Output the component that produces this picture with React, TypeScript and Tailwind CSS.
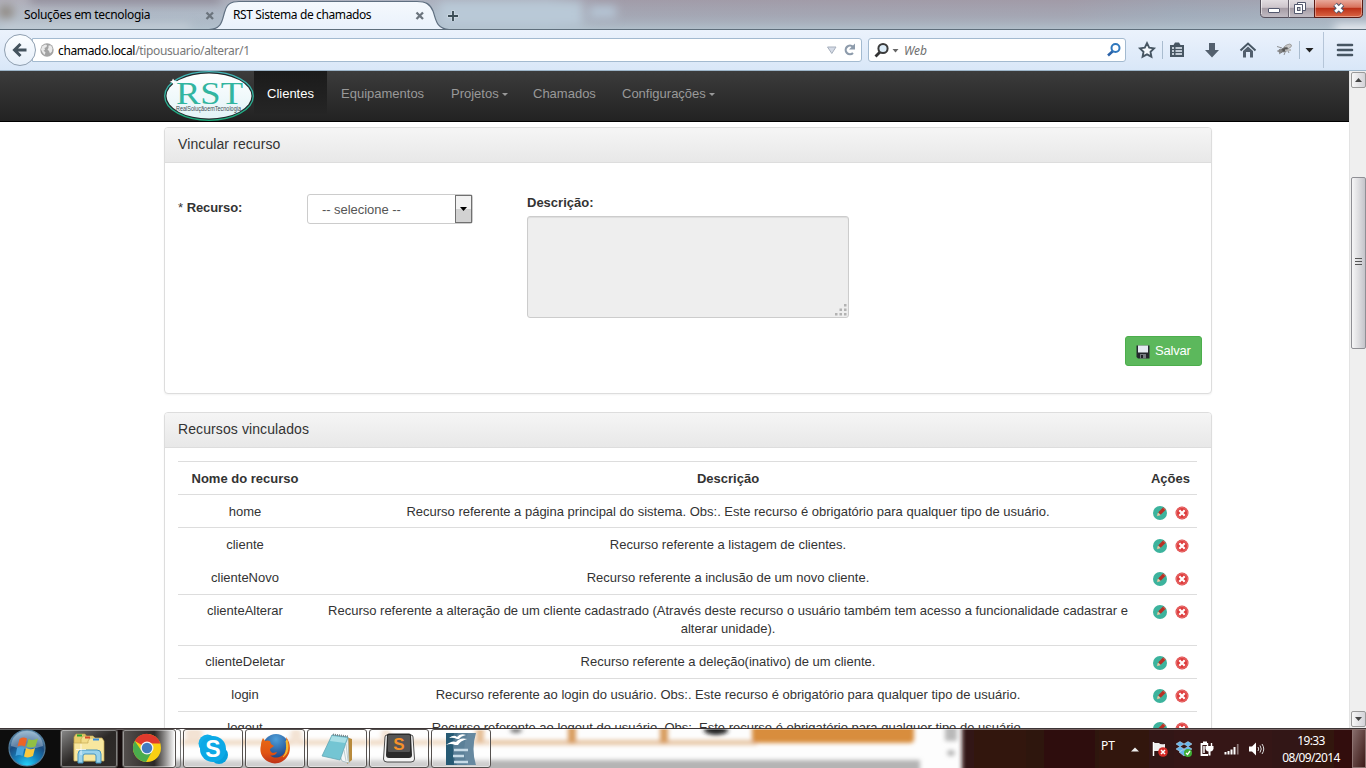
import React from "react";

type Resource = { name: string; text: string; height: string; line: boolean };

const resources: Resource[] = [
  { name: "home", text: "Recurso referente a página principal do sistema. Obs:. Este recurso é obrigatório para qualquer tipo de usuário.", height: "h-[33px] pt-[8px]", line: true },
  { name: "cliente", text: "Recurso referente a listagem de clientes.", height: "h-[34px] pt-[8px]", line: true },
  { name: "clienteNovo", text: "Recurso referente a inclusão de um novo cliente.", height: "h-[33px] pt-[7px]", line: false },
  { name: "clienteAlterar", text: "Recurso referente a alteração de um cliente cadastrado (Através deste recurso o usuário também tem acesso a funcionalidade cadastrar e alterar unidade).", height: "h-[51px] pt-[7px]", line: true },
  { name: "clienteDeletar", text: "Recurso referente a deleção(inativo) de um cliente.", height: "h-[33px] pt-[7px]", line: true },
  { name: "login", text: "Recurso referente ao login do usuário. Obs:. Este recurso é obrigatório para qualquer tipo de usuário.", height: "h-[33px] pt-[7px]", line: true },
  { name: "logout", text: "Recurso referente ao logout do usuário. Obs:. Este recurso é obrigatório para qualquer tipo de usuário.", height: "h-[33px] pt-[7px]", line: true },
];

const columns = "grid grid-cols-[134px_832px_53px]";

function TabClose() {
  return (
    <svg width="10" height="10" viewBox="0 0 10 10" className="mt-px shrink-0">
      <path d="M1.500 1.500 8 8M8 1.500 1.500 8" stroke="#6b747d" strokeWidth="2.300" />
    </svg>
  );
}

function WindowButtons() {
  return (
    <svg width="104" height="20" viewBox="0 0 104 20" className="ml-auto mr-[2px] shrink-0 self-start">
      <defs>
        <linearGradient id="wb" x1="0" y1="0" x2="0" y2="1">
          <stop offset="0" stopColor="#e4dfe3" />
          <stop offset=".45" stopColor="#cdc5cb" />
          <stop offset=".5" stopColor="#a59ca5" />
          <stop offset="1" stopColor="#c3bdc5" />
        </linearGradient>
        <linearGradient id="wc" x1="0" y1="0" x2="0" y2="1">
          <stop offset="0" stopColor="#eab0a3" />
          <stop offset=".45" stopColor="#d8715c" />
          <stop offset=".5" stopColor="#bb2f17" />
          <stop offset="1" stopColor="#dc6a48" />
        </linearGradient>
      </defs>
      <path d="M.5 -1V13.500Q.5 17.500 5 17.500H56V-1Z" fill="url(#wb)" stroke="#55505c" />
      <path d="M28.500 0V18" stroke="#6b6570" />
      <path d="M29.500 0V17M1.500 0V14" stroke="#fff" strokeOpacity=".55" />
      <path d="M54.500 -1V17.500H98Q102.500 17.500 102.500 13.500V-1Z" fill="url(#wc)" stroke="#5a1a14" />
      <path d="M55.500 0V16.500H98Q101.500 16.500 101.500 13.500V0" fill="none" stroke="#fff" strokeOpacity=".35" />
      <rect x="8.500" y="8.500" width="11" height="4" rx=".5" fill="#fff" stroke="#53586e" />
      <path d="M37.500 2.500H45.500V10.500H37.500Z" fill="#fff" stroke="#53586e" />
      <path d="M34.500 4.500H42.500V13.500H34.500Z" fill="#fff" stroke="#53586e" />
      <rect x="37.500" y="7.500" width="2.500" height="3" fill="#ccc" stroke="#53586e" />
      <path d="M75 4.500 82.500 12M82.500 4.500 75 12" stroke="#53586e" strokeWidth="5" />
      <path d="M75.300 4.700 82.200 11.700M82.200 4.700 75.300 11.700" stroke="#fff" strokeWidth="2.800" />
    </svg>
  );
}

function TabStrip() {
  return (
    <div className="relative flex h-[30px] shrink-0 overflow-hidden border-b border-[#5f6f7c] bg-[#a9b4c2] font-['Noto_Sans','Open_Sans',sans-serif] text-[12px] text-black">
      <svg width="1366" height="30" className="absolute left-0 top-0" preserveAspectRatio="none">
        <defs>
          <filter id="soft" x="-20%" y="-50%" width="140%" height="200%"><feGaussianBlur stdDeviation="5" /></filter>
          <linearGradient id="strip" x1="0" y1="0" x2="1" y2="0">
            <stop offset="0" stopColor="#bcc1ca" />
            <stop offset=".1" stopColor="#b2bcc9" />
            <stop offset=".4" stopColor="#b5c5d3" />
            <stop offset=".44" stopColor="#a4a3b0" />
            <stop offset=".78" stopColor="#a4a1ae" />
            <stop offset=".86" stopColor="#a0abba" />
            <stop offset="1" stopColor="#a9b2c0" />
          </linearGradient>
          <linearGradient id="stripv" x1="0" y1="0" x2="0" y2="1">
            <stop offset="0" stopColor="#9d8f9b" stopOpacity=".35" />
            <stop offset=".5" stopColor="#a5b0bd" stopOpacity=".3" />
            <stop offset="1" stopColor="#b3c4cf" stopOpacity=".9" />
          </linearGradient>
        </defs>
        <rect width="1366" height="30" fill="url(#strip)" />
        <rect width="1366" height="30" fill="url(#stripv)" />
        <g filter="url(#soft)">
          <ellipse cx="6" cy="12" rx="8" ry="7" fill="#8f8982" />
          <rect x="440" y="2" width="142" height="24" fill="#b9c9d7" />
          <rect x="590" y="6" width="26" height="12" fill="#b6c6d6" />
          <rect x="30" y="-6" width="190" height="9" fill="#8d8997" />
          <rect x="0" y="25" width="190" height="5" fill="#ccd3dc" />
          <rect x="1335" y="24" width="40" height="12" fill="#e7eaf0" />
        </g>
      </svg>
      <div className="relative flex w-[215px] items-center pl-6 pt-px">
        <span className="w-[182px] whitespace-nowrap tracking-[-0.32px]">Soluções em tecnologia</span>
        <TabClose />
      </div>
      <div className="relative flex w-[230px] items-center pl-[18px] pt-px">
        <svg width="244" height="30" viewBox="0 0 244 30" className="absolute -left-[8px] top-0">
          <defs>
            <linearGradient id="act" x1="0" y1="0" x2="0" y2="1">
              <stop offset="0" stopColor="#f5f9fd" />
              <stop offset="1" stopColor="#e9f1fb" />
            </linearGradient>
          </defs>
          <path d="M2 29.500C16 29 15 19 18 11C20 4 24 1.500 32 1.500H210C219 1.500 223 4 226 11C229 19 229 29 242 29.500V31H2Z" fill="url(#act)" stroke="#5f6f80" strokeWidth="1.200" />
        </svg>
        <span className="relative w-[182px] whitespace-nowrap tracking-[-0.38px]">RST Sistema de chamados</span>
        <span className="relative"><TabClose /></span>
      </div>
      <svg width="14" height="14" viewBox="0 0 14 14" className="relative ml-[1px] mt-[9px]">
        <path d="M7 1.500V12M1.500 7H12.500" stroke="#eef3f6" strokeWidth="3" strokeOpacity=".6" />
        <path d="M7 2V12M2 7H12" stroke="#3c4e57" strokeWidth="1.900" />
      </svg>
      <div className="relative ml-auto flex"><WindowButtons /></div>
    </div>
  );
}

function Toolbar() {
  return (
    <div className="flex h-[41px] shrink-0 items-center border-b border-[#9db5c9] bg-gradient-to-b from-[#ebf2fc] to-[#d9e7f8] font-['Noto_Sans','Open_Sans',sans-serif] text-[12px]">
      <div className="z-10 ml-1 flex size-8 items-center justify-center rounded-full border border-[#8f9fb0] bg-gradient-to-b from-[#fbfdff] to-[#e6effa]">
        <svg width="16" height="16" viewBox="0 0 16 16"><path d="M14.500 8H3M8.500 2 2.500 8 8.500 14" fill="none" stroke="#44535e" strokeWidth="3" /></svg>
      </div>
      <div className="-ml-1 flex h-6 w-[830px] items-center rounded-r-[3px] border border-[#a3bad0] bg-white pl-[7px]">
        <svg width="14" height="14" viewBox="0 0 14 14">
          <circle cx="7" cy="7" r="6.700" fill="#a3a3a3" />
          <path d="M2 3.500 5 1.500 7 2 6.500 4 4.500 5 5 7 3.500 7.500 5.500 9.500 4.500 12 2.500 9.500 1 6.500ZM8.500 2.500 11 2.500 12.500 5 12 8.500 10 10.500 9 8 7.500 6.500 8.500 5Z" fill="#e9e9e9" />
        </svg>
        <span className="ml-[4px] mt-[2px] whitespace-nowrap tracking-[-0.35px] text-[#777]"><span className="text-black">chamado.local</span>/tipousuario/alterar/1</span>
        <svg width="40" height="16" viewBox="0 0 40 16" className="ml-auto">
          <path d="M6.500 5H15L10.800 11.500Z" fill="#d5dbe6" stroke="#a7b0bd" />
          <path d="M32 4.800A4.300 4.300 0 1 0 32 11" fill="none" stroke="#8d9bab" strokeWidth="2.200" />
          <path d="M34 1.500V7.500H28Z" fill="#8d9bab" />
        </svg>
      </div>
      <div className="ml-[6px] flex h-6 w-[258px] items-center rounded-[3px] border border-[#a3bad0] bg-white pl-[5px] pr-[3px]">
        <svg width="26" height="16" viewBox="0 0 26 16">
          <path d="M6 10 1.500 14.500" stroke="#333" strokeWidth="2.800" />
          <circle cx="9" cy="6.500" r="4.600" fill="#dcecf8" stroke="#3b3b3b" strokeWidth="2" />
          <path d="M18.500 7H24.500L21.500 10.500Z" fill="#666" />
        </svg>
        <span className="ml-[4px] mt-[2px] italic text-[#6f6f6f]">Web</span>
        <svg width="16" height="16" viewBox="0 0 16 16" className="ml-auto">
          <path d="M7 9 2 13.500" stroke="#2b62a8" strokeWidth="2.600" />
          <circle cx="9.500" cy="6" r="4" fill="#fff" stroke="#2f77bd" strokeWidth="2" />
        </svg>
      </div>
      <svg width="240" height="40" viewBox="1126 30 240 40">
        <path d="M1147 43.200 1149.200 47.700 1154 48.400 1150.500 51.800 1151.400 56.700 1147 54.300 1142.600 56.700 1143.500 51.800 1140 48.400 1144.800 47.700Z" fill="#f4f8fd" stroke="#475663" strokeWidth="1.900" />
        <path d="M1162.500 41V59M1299.500 41V59" stroke="#a9bccf" />
        <path d="M1323.500 32V68" stroke="#b5c5d8" />
        <path d="M1170 45H1173.500L1175 42.500H1179L1180.500 45H1184V57H1170Z" fill="#475663" />
        <path d="M1172 48H1174M1175.500 48H1182M1172 51H1174M1175.500 51H1182M1172 54H1174M1175.500 54H1182" stroke="#e9f1fb" strokeWidth="1.500" />
        <path d="M1209 43H1215V50H1219L1212 57.500 1205 50H1209Z" fill="#53606e" />
        <path d="M1240.500 50.500 1248 43.500 1255.500 50.500" fill="none" stroke="#475663" strokeWidth="2" />
        <path d="M1243 51 1248 46.500 1253 51V57.500H1250V52H1246V57.500H1243Z" fill="#53606e" />
        <g fill="none" stroke="#777" strokeWidth=".8">
          <path d="M1277 46.500 1282 48M1279 54 1283 51M1284 55 1286 50M1289 53 1287 49M1277 51H1282" />
          <ellipse cx="1287.500" cy="46.500" rx="4" ry="2" fill="#c9c9c9" stroke="#999" transform="rotate(-25 1288 46)" />
          <ellipse cx="1284.500" cy="49.500" rx="3.500" ry="2" fill="#555" transform="rotate(-20 1285 49)" />
          <ellipse cx="1280.500" cy="51" rx="1.800" ry="1.800" fill="#888" />
          <path d="M1285 50.500 1291 50" stroke="#bbb" strokeWidth="2" />
        </g>
        <path d="M1305.500 48H1313.500L1309.500 52.500Z" fill="#222" />
        <path d="M1338 45H1352M1338 50H1352M1338 55H1352" stroke="#475663" strokeWidth="2.600" strokeLinecap="round" />
      </svg>
    </div>
  );
}

function Caret() {
  return <span className="mb-[1px] ml-[3px] inline-block border-x-[3px] border-t-[3px] border-x-transparent border-t-[#999] align-middle" />;
}

function Logo() {
  return (
    <svg width="90" height="51" viewBox="0 0 90 51" className="shrink-0">
      <defs>
        <linearGradient id="ring" x1="0" y1="0" x2="0" y2="1"><stop offset="0" stopColor="#45b7bb" /><stop offset="1" stopColor="#1cab7b" /></linearGradient>
        <linearGradient id="plate" x1="0" y1="0" x2="0" y2="1"><stop offset="0" stopColor="#fff" /><stop offset="1" stopColor="#e2f3f7" /></linearGradient>
      </defs>
      <ellipse cx="45" cy="25" rx="44.300" ry="24.300" fill="#20282a" stroke="url(#ring)" strokeWidth="1.300" />
      <ellipse cx="45" cy="25" rx="42.500" ry="22.500" fill="url(#plate)" />
      <path d="M9 7.500 10.300 9.500 13 10 10.500 11.300 9.500 13.500 8 11.500 5.500 11 8 9.800Z" fill="#fff" />
      <path d="M10 11 15 11.500" stroke="#f4fafc" strokeWidth="2" />
      <text x="12" y="32.500" textLength="67" lengthAdjust="spacingAndGlyphs" fontFamily="Liberation Serif, serif" fontSize="32" fill="#32b5a0">RST</text>
      <text x="12" y="40" textLength="65" lengthAdjust="spacingAndGlyphs" fontFamily="Liberation Sans, sans-serif" fontSize="7.500" fill="#414b50">RealSoluçãoemTecnologia</text>
    </svg>
  );
}

function Navbar() {
  return (
    <nav className="flex h-[51px] shrink-0 border-b border-black bg-gradient-to-b from-[#3c3c3c] to-[#222] pl-[164px] text-[13px] leading-[45px] text-[#999]">
      <Logo />
      <a className="h-[43px] w-[73px] bg-gradient-to-b from-[#1b1b1b] to-[#252525] pl-[13px] text-white">Clientes</a>
      <a className="w-[110px] pl-[14px]">Equipamentos</a>
      <a className="w-[82px] pl-[14px]">Projetos<Caret /></a>
      <a className="w-[89px] pl-[14px]">Chamados</a>
      <a className="pl-[14px]">Configurações<Caret /></a>
    </nav>
  );
}

function Panel({ title, className, children }: { title: string; className: string; children: React.ReactNode }) {
  return (
    <section className={`rounded-[4px] border border-[#ddd] bg-white shadow-[0_1px_2px_rgba(0,0,0,0.05)] ${className}`}>
      <h2 className="h-[35px] rounded-t-[3px] border-b border-[#ddd] bg-gradient-to-b from-[#f5f5f5] to-[#e8e8e8] pl-[13px] text-[14px] leading-[33px] tracking-[0.1px]">{title}</h2>
      {children}
    </section>
  );
}

function SaveIcon() {
  return (
    <svg width="14" height="14" viewBox="0 0 14 14">
      <path d="M.5.500H13.500V13.500H2L.5 12Z" fill="#25282e" />
      <path d="M2 .5H12V7.500H2Z" fill="#e5eaf2" />
      <path d="M4 9H10V13.500H4Z" fill="#777c83" />
      <path d="M5 10H7V13H5Z" fill="#202329" />
    </svg>
  );
}

function Actions() {
  return (
    <svg width="38" height="16" viewBox="0 0 38 16">
      <circle cx="8" cy="8" r="7" fill="#3cb39d" />
      <path d="M7.500 8.500 12.500 3.500" stroke="#b93025" strokeWidth="3.400" />
      <path d="M5.300 10.800 6 8 8.200 10Z" fill="#f3c9a0" stroke="#efc6a0" strokeWidth=".5" />
      <path d="M11.500 3 13.500 5" stroke="#d97362" />
      <circle cx="30" cy="8" r="6.500" fill="#de3c3c" />
      <circle cx="30" cy="8" r="5.500" fill="none" stroke="#ed8888" strokeWidth=".7" />
      <path d="M27.300 5.300 32.700 10.700M32.700 5.300 27.300 10.700" stroke="#fff" strokeWidth="2.200" />
    </svg>
  );
}

function Scrollbar() {
  return (
    <div className="flex w-[17px] shrink-0 flex-col items-center border-l border-[#e3e3e3] bg-[#efefef] pl-px">
      <div className="mt-px flex h-4 w-[15px] items-center justify-center rounded-[2px] border border-[#999] bg-gradient-to-r from-[#f7f7f7] to-[#d3d3d8]">
        <svg width="7" height="4"><path d="M0 4 3.500 0 7 4Z" fill="#444" /></svg>
      </div>
      <div className="mt-[89px] flex h-[172px] w-[15px] flex-col items-center justify-center gap-[2px] rounded-[2px] border border-[#8f8f95] bg-gradient-to-r from-[#f6f6f7] via-[#dedee1] to-[#c4c4ca] pb-[3px]">
        <i className="h-px w-[7px] bg-[#555]" /><i className="h-px w-[7px] bg-[#555]" /><i className="h-px w-[7px] bg-[#555]" />
      </div>
      <div className="mb-[1px] mt-auto flex h-4 w-[15px] items-center justify-center rounded-[2px] border border-[#999] bg-gradient-to-r from-[#f7f7f7] to-[#d3d3d8]">
        <svg width="7" height="4"><path d="M0 0 3.500 4 7 0Z" fill="#444" /></svg>
      </div>
    </div>
  );
}

function Page() {
  return (
    <main className="flex min-h-0 flex-1 overflow-hidden bg-white">
      <div className="flex min-w-0 flex-1 flex-col">
        <Navbar />
        <div className="min-h-0 flex-1 overflow-hidden pl-[164px] pt-[5px] text-[13px] leading-[18px] text-[#333]">
          <Panel title="Vincular recurso" className="flex h-[267px] w-[1048px] flex-col">
            <div className="flex">
              <div className="w-[129px] pl-[13px] pt-[36px]">* <b className="tracking-[-0.1px]">Recurso:</b></div>
              <div className="ml-[13px] mr-[54px] mt-[31px] flex h-[30px] w-[166px] rounded-[3px] border border-[#ccc] text-[#555]">
                <span className="flex-1 pl-[14px] leading-[29px] tracking-[-0.05px]">-- selecione --</span>
                <span className="flex w-[17px] items-center justify-center border border-[#707070] bg-gradient-to-b from-[#f2f2f2] from-50% to-[#d2d2d2] to-50%">
                  <svg width="7" height="4"><path d="M0 0H7L3.500 4Z" fill="#000" /></svg>
                </span>
              </div>
              <div className="pt-[31px]">
                <b className="block">Descrição:</b>
                <div className="mt-[4px] flex h-[102px] w-[322px] items-end justify-end rounded-[3px] border border-[#ccc] bg-[#eee] shadow-[inset_0_1px_1px_rgba(0,0,0,0.075)]">
                  <svg width="13" height="13" viewBox="0 0 13 13"><path d="M9 0h2.500v2.500h-2.500zM4.500 4.500h2.500v2.500h-2.500zM9 4.500h2.500v2.500h-2.500zM0 9h2.500v2.500h-2.500zM4.500 9h2.500v2.500h-2.500zM9 9h2.500v2.500h-2.500z" fill="#b2b2b2" /></svg>
                </div>
              </div>
            </div>
            <button className="ml-auto mr-[9px] mt-[18px] flex h-[30px] w-[77px] items-center rounded-[3px] border border-[#4cae4c] bg-[#5cb85c] pl-[10px] text-white">
              <span className="mt-[2px]"><SaveIcon /></span><span className="ml-[5px] tracking-[-0.2px]">Salvar</span>
            </button>
          </Panel>
          <Panel title="Recursos vinculados" className="mt-[18px] h-[400px] w-[1048px]">
            <div className="ml-[13px] mt-[13px] w-[1019px] text-center">
              <div className={`${columns} h-[33px] border-t border-[#ddd] pt-[8px] font-bold`}>
                <span>Nome do recurso</span><span>Descrição</span><span>Ações</span>
              </div>
              {resources.map((r) => (
                <div key={r.name} className={`${columns} ${r.height} border-t ${r.line ? "border-[#ddd]" : "border-transparent"}`}>
                  <span>{r.name}</span>
                  <span className="px-[7px]">{r.text}</span>
                  <span className="flex justify-center pt-[2px]"><Actions /></span>
                </div>
              ))}
            </div>
          </Panel>
        </div>
      </div>
      <Scrollbar />
    </main>
  );
}

function TaskButton({ children, className }: { children: React.ReactNode; className: string }) {
  return (
    <div className={`flex h-[39px] shrink-0 items-center justify-center rounded-[3px] border border-[#55514f] shadow-[inset_0_0_0_1px_rgba(255,255,255,0.4)] ${className}`}>
      {children}
    </div>
  );
}

function TaskBackdrop() {
  return (
    <svg width="1366" height="40" className="absolute left-0 top-0">
      <defs>
        <filter id="b2" x="-20%" y="-60%" width="140%" height="220%"><feGaussianBlur stdDeviation="2.200" /></filter>
        <linearGradient id="tbl" x1="0" y1="0" x2="1" y2="0"><stop offset="0" stopColor="#0a0606" /><stop offset="1" stopColor="#171111" /></linearGradient>
        <linearGradient id="tbr" x1="0" y1="0" x2="1" y2="0"><stop offset="0" stopColor="#321412" /><stop offset=".25" stopColor="#2e110f" /><stop offset=".6" stopColor="#361514" /><stop offset="1" stopColor="#2e100f" /></linearGradient>
        <linearGradient id="tbb" x1="0" y1="0" x2="0" y2="1"><stop offset="0" stopColor="#fff" /><stop offset="1" stopColor="#b5b5b5" /></linearGradient>
      </defs>
      <rect width="1366" height="40" fill="#fdfdfd" />
      <rect x="140" y="32" width="780" height="14" fill="#b4b4b4" filter="url(#b2)" />
      <g filter="url(#b2)">
        <rect x="182" y="12" width="575" height="5" fill="#e6c4a2" />
        <rect x="752" y="-8" width="162" height="23" rx="4" fill="#d88d3e" />
        <rect x="476" y="-3" width="8" height="18" fill="#d89c5e" />
        <rect x="568" y="-3" width="8" height="18" fill="#d89c5e" />
        <rect x="660" y="-3" width="8" height="18" fill="#d89c5e" />
        <ellipse cx="516" cy="2" rx="6" ry="3" fill="#777" />
        <ellipse cx="716" cy="2" rx="12" ry="5" fill="#222" />
        <ellipse cx="194" cy="6" rx="9" ry="8" fill="#edd4bd" />
        <ellipse cx="296" cy="8" rx="6" ry="8" fill="#edd4bd" />
        <ellipse cx="386" cy="8" rx="5" ry="8" fill="#edd4bd" />
        <rect x="945" y="-4" width="12" height="17" fill="#b9b9b9" />
        <ellipse cx="951" cy="25" rx="4" ry="3" fill="#b5b5b5" />
      </g>
      <rect x="-20" y="-10" width="182" height="65" fill="url(#tbl)" filter="url(#b2)" />
      <rect x="962" y="-12" width="430" height="70" fill="url(#tbr)" filter="url(#b2)" />
      <path d="M0 .5H1366" stroke="#3d3536" />
      <path d="M0 1.500H1366" stroke="#fff" strokeOpacity=".35" />
    </svg>
  );
}

function StartOrb() {
  return (
    <svg width="40" height="40" viewBox="0 0 40 40">
      <defs>
        <radialGradient id="orb" cx=".5" cy="1" r="1"><stop offset="0" stopColor="#25d8ff" /><stop offset=".35" stopColor="#1681bd" /><stop offset=".65" stopColor="#1c4c80" /><stop offset="1" stopColor="#7ba7c4" /></radialGradient>
      </defs>
      <circle cx="20" cy="20" r="18" fill="url(#orb)" stroke="#527c9b" strokeWidth="1.200" />
      <path d="M4 18A16 15 0 0 1 36 18Q20 24 4 18Z" fill="#fff" opacity=".3" />
      <path d="M12.500 11Q16 8.500 20 10.500L18 18.500Q14 16.500 10.500 18.500Z" fill="#ec6427" />
      <path d="M21.500 11Q26 13 31 10.500L28.500 18.500Q24 20.500 19.500 18.500Z" fill="#91c044" />
      <path d="M10 20Q14 18 17.500 20L15.500 28Q12 26 8.500 28Z" fill="#45a2dd" />
      <path d="M19 20Q24 22.500 28 20L26 28Q21 30.500 17 28.500Z" fill="#fac83d" />
    </svg>
  );
}

function ExplorerIcon() {
  return (
    <svg width="34" height="34" viewBox="0 0 34 34">
      <path d="M2 5 4 2H13L15 5V28H2Z" fill="#e9cc6d" stroke="#b99d45" strokeWidth=".7" />
      <path d="M9 7 11 4H21L23 6V29H9Z" fill="#f2dc88" stroke="#c0a54c" strokeWidth=".7" />
      <path d="M16 9 18 6H30L32 9V29H2V11H16Z" fill="#f8e79f" stroke="#c6ab55" strokeWidth=".7" />
      <path d="M5 3.500H10" stroke="#28a52d" strokeWidth="2" /><path d="M13 5.500H18" stroke="#d94b2b" strokeWidth="2" /><path d="M21 7.500H27" stroke="#3a8edb" strokeWidth="2" />
      <path d="M6 31V22Q6 18 10 18H25Q29 18 29 22V31H24V24Q24 22 22 22H13Q11 22 11 24V31Z" fill="#99d2eb" stroke="#4593bd" />
      <path d="M9 12V23M4 17.500H14" stroke="#fff" strokeOpacity=".7" />
    </svg>
  );
}

function ChromeIcon() {
  return (
    <svg width="30" height="30" viewBox="0 0 30 30" className="-translate-x-[2px] -translate-y-px">
      <circle cx="15" cy="15" r="14" fill="#f9d013" />
      <path d="M15 15 2.800 8A14 14 0 0 1 28.300 10.500H16Z" fill="#df3a2d" />
      <path d="M2.800 8A14 14 0 0 0 14 29L20 18.500 15 15 9 17Z" fill="#4aac4d" />
      <circle cx="15" cy="15" r="6.500" fill="#f5f5f5" />
      <circle cx="15" cy="15" r="5.200" fill="#417bc0" />
    </svg>
  );
}

function SkypeIcon() {
  return (
    <svg width="32" height="32" viewBox="0 0 32 32">
      <circle cx="10.500" cy="10.500" r="9" fill="#11aee9" /><circle cx="22" cy="22" r="9" fill="#079fdc" /><circle cx="16" cy="16" r="13" fill="#0ca9e6" />
      <text x="16" y="24" textAnchor="middle" fontFamily="Liberation Sans, sans-serif" fontWeight="bold" fontSize="23" fill="#fff">S</text>
    </svg>
  );
}

function FirefoxIcon() {
  return (
    <svg width="32" height="32" viewBox="0 0 32 32">
      <defs>
        <linearGradient id="fox" x1="0" y1="0" x2="0" y2="1"><stop offset="0" stopColor="#e86b16" /><stop offset=".6" stopColor="#e15412" /><stop offset="1" stopColor="#bd3219" /></linearGradient>
        <radialGradient id="glb" cx=".5" cy=".2" r=".8"><stop offset="0" stopColor="#4e9fda" /><stop offset="1" stopColor="#173b7f" /></radialGradient>
      </defs>
      <circle cx="17" cy="14" r="13" fill="url(#glb)" />
      <path d="M27 4C32 10 32 19 28 24C24 30 16 32 10 29C3 26 0 19 2 12C2 9 3 7 4 5L6 8Q8 7 11 8L12 11 15 13 11 16Q11 19 14 20L18 19C17 23 12 23 11 22C15 27 24 24 26 19C28 14 28 9 27 4Z" fill="url(#fox)" />
      <path d="M28 7C30 14 29 21 24 24C28 20 28 13 27 8Z" fill="#f7cf45" stroke="#f2b830" />
    </svg>
  );
}

function NotepadIcon() {
  return (
    <svg width="34" height="32" viewBox="0 0 34 32">
      <path d="M26 4 32 6V27L27 31Z" fill="#b88a3c" />
      <path d="M12 2 28 4 29 30 22 28Z" fill="#f3f7f8" stroke="#9ab2b8" strokeWidth=".7" />
      <path d="M12 2 28 4 20 27 2 23Z" fill="#74c5d3" stroke="#5a9fae" strokeWidth=".7" />
      <path d="M12 3 27 5 25 10 10 8Z" fill="#a9dfe6" />
      <path d="M13 1.500 28 3.500" stroke="#76858a" strokeWidth="2" strokeDasharray="1 1" />
      <path d="M24 17 26 28M26 11 28 28" stroke="#a8babd" strokeWidth=".7" />
    </svg>
  );
}

function SublimeIcon() {
  return (
    <svg width="32" height="32" viewBox="0 0 32 32" className="-translate-y-px">
      <path d="M2 5Q2 3 4 3H28Q30 3 30 5L31.500 27Q31.500 30 28 30H4Q.5 30 .5 27Z" fill="#f4f4f4" stroke="#222" strokeWidth=".8" />
      <path d="M4 3Q4 1.500 6 1.500H26Q28 1.500 28 3L29 23Q29 26 26 26H6Q3 26 3 23Z" fill="#2b2b2b" />
      <path d="M5 4Q5 3 6 3H26Q27 3 27 4V19Q27 20 26 20H6Q5 20 5 19Z" fill="#555" />
      <text x="16" y="17.500" textAnchor="middle" fontFamily="Liberation Sans, sans-serif" fontWeight="bold" fontSize="17" fill="#f5912a">S</text>
    </svg>
  );
}

function WriterIcon() {
  return (
    <svg width="34" height="34" viewBox="0 0 34 34">
      <path d="M2 1H32Q27 17 32 33H2Z" fill="#6789a0" />
      <path d="M2 1H14Q5 17 13 33H2Z" fill="#265a74" />
      <path d="M10 1Q8 15 10 33L23 33Q17 17 24 1Z" fill="#547a92" opacity=".6" />
      <path d="M10 18H24M9 24H20M10 30H24" stroke="#c7dbe7" strokeWidth="2.500" />
      <path d="M5 6Q10 2 13 5Q16 1 22 3Q17 4 15 7L13 7Q9 5 5 6ZM2 13Q8 8 12 10Q16 5 23 7Q16 9 14 13L11 13Q7 11 2 13Z" fill="#fff" />
    </svg>
  );
}

function TrayIcons() {
  return (
    <svg width="136" height="20" viewBox="0 0 136 20">
      <path d="M0 12.500H8L4 8.500Z" fill="#eee" />
      <path d="M22.500 3V17" stroke="#fff" strokeWidth="1.500" />
      <path d="M23 4H28Q29 6 34 5V12H23Z" fill="#eee" />
      <circle cx="32" cy="13" r="4.800" fill="#d52a27" /><path d="M30 11 34 15M34 11 30 15" stroke="#fff" strokeWidth="1.500" />
      <path d="M45 5 49 2.500 53 5 49 7.500ZM53 5 57 2.500 61 5 57 7.500ZM45 10 49 7.500 53 10 49 12.500ZM53 10 57 7.500 61 10 57 12.500ZM48 13 53 10.500 58 13 53 17Z" fill="#67b7ec" stroke="#c5e6fb" strokeWidth=".5" />
      <circle cx="57" cy="14" r="4" fill="#3fae34" /><path d="M55 14 56.500 15.500 59 12" fill="none" stroke="#fff" strokeWidth="1.300" />
      <path d="M77 5H70.500V16H77M72 3.500H76" fill="none" stroke="#fff" strokeWidth="1.800" />
      <path d="M73 7V14" stroke="#fff" strokeWidth="1.500" />
      <path d="M76.500 4V7M80.500 4V7" stroke="#fff" strokeWidth="1.400" />
      <path d="M74.500 7H82.500V10Q81.500 12.500 79.500 12.500V16.500H77.500V12.500Q75.500 12.500 74.500 10Z" fill="#fff" />
      <path d="M94.500 15.500V13M97.500 15.500V12M100.500 15.500V10.500M103.500 15.500V8" stroke="#fff" strokeWidth="2" />
      <path d="M106.700 15.500V5" stroke="#8e7b7a" strokeWidth="1.700" />
      <path d="M118 7.500H121L125 3.500V16.500L121 12.500H118Z" fill="#fff" />
      <path d="M127 8Q128.500 10 127 12M129 6.500Q131.500 10 129 13.500M131 5Q134.500 10 131 15" fill="none" stroke="#ddd" />
    </svg>
  );
}

function Taskbar() {
  return (
    <footer className="relative h-10 shrink-0 overflow-hidden font-['Noto_Sans','Open_Sans',sans-serif] text-[12px] text-white">
      <TaskBackdrop />
      <div className="relative flex h-10 pt-px">
        <div className="-mt-px ml-[7px] w-[53px]"><StartOrb /></div>
        <TaskButton className="w-[58px] bg-gradient-to-br from-[#8b8b8b] via-[#2b2826] to-[#302c2a]"><ExplorerIcon /></TaskButton>
        <TaskButton className="ml-[4px] w-[54px] bg-gradient-to-r from-[#55504e] via-[#2b2826] via-60% to-white"><ChromeIcon /></TaskButton>
        <div className="mr-[2px] h-[39px] w-[5px] rounded-r-[3px] border-y border-r border-[#777]" />
        <TaskButton className="w-[60px] bg-white/35"><SkypeIcon /></TaskButton>
        <TaskButton className="ml-[2px] w-[60px] bg-white/35"><FirefoxIcon /></TaskButton>
        <TaskButton className="ml-[2px] w-[60px] bg-white/35"><NotepadIcon /></TaskButton>
        <TaskButton className="ml-[2px] w-[60px] bg-white/35"><SublimeIcon /></TaskButton>
        <TaskButton className="ml-[2px] w-[60px] bg-white/35"><WriterIcon /></TaskButton>
        <div className="ml-auto flex">
          <span className="mr-[16px] pt-[8px]">PT</span>
          <span className="mr-[7px] pt-[10px]"><TrayIcons /></span>
          <span className="w-[74px] whitespace-nowrap pt-[3px] text-center leading-[17px] tracking-[-0.65px]">19:33<br />08/09/2014</span>
          <span className="ml-[4px] h-[39px] w-[14px] border border-[#8d7371] bg-gradient-to-br from-[#866c6b] to-[#3c1a18]" />
        </div>
      </div>
    </footer>
  );
}

export default function App() {
  return (
    <div className="flex h-[768px] w-[1366px] flex-col overflow-hidden bg-white font-['Liberation_Sans',Arial,sans-serif]">
      <TabStrip />
      <Toolbar />
      <Page />
      <Taskbar />
    </div>
  );
}
